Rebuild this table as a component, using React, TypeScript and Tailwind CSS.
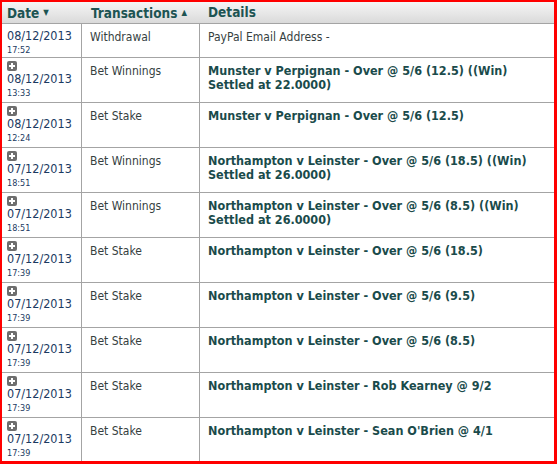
const rows = [
  { date: "08/12/2013", time: "17:52", type: "Withdrawal", details: ["PayPal Email Address -"], plain: true, icon: false },
  { date: "08/12/2013", time: "13:33", type: "Bet Winnings", details: ["Munster v Perpignan - Over @ 5/6 (12.5) ((Win)", "Settled at 22.0000)"] },
  { date: "08/12/2013", time: "12:24", type: "Bet Stake", details: ["Munster v Perpignan - Over @ 5/6 (12.5)"] },
  { date: "07/12/2013", time: "18:51", type: "Bet Winnings", details: ["Northampton v Leinster - Over @ 5/6 (18.5) ((Win)", "Settled at 26.0000)"] },
  { date: "07/12/2013", time: "18:51", type: "Bet Winnings", details: ["Northampton v Leinster - Over @ 5/6 (8.5) ((Win)", "Settled at 26.0000)"] },
  { date: "07/12/2013", time: "17:39", type: "Bet Stake", details: ["Northampton v Leinster - Over @ 5/6 (18.5)"] },
  { date: "07/12/2013", time: "17:39", type: "Bet Stake", details: ["Northampton v Leinster - Over @ 5/6 (9.5)"] },
  { date: "07/12/2013", time: "17:39", type: "Bet Stake", details: ["Northampton v Leinster - Over @ 5/6 (8.5)"] },
  { date: "07/12/2013", time: "17:39", type: "Bet Stake", details: ["Northampton v Leinster - Rob Kearney @ 9/2"] },
  { date: "07/12/2013", time: "17:39", type: "Bet Stake", details: ["Northampton v Leinster - Sean O'Brien @ 4/1"] },
];

function PlusIcon() {
  return (
    <svg width="10" height="10" viewBox="0 0 10 10" className="block">
      <rect x="0" y="0" width="10" height="10" rx="2" fill="#6e6e6e" />
      <path d="M5 2v6M2 5h6" stroke="#fff" strokeWidth="2" />
    </svg>
  );
}

export default function App() {
  return (
    <div
      className="w-[557px] h-[464px] overflow-hidden border-t-2 border-l-2 border-r-[3px] border-b-[3px] border-[#ff0000] bg-white"
      style={{ fontFamily: '"DejaVu Sans Condensed", "DejaVu Sans", sans-serif' }}
    >
      <div className="grid grid-cols-[80px_118px_1fr] h-[22px] bg-gradient-to-b from-[#f6f6f6] to-[#dadada] border-b border-[#a4a4a4] text-[13.5px] font-bold text-[#1d5453] leading-[20px]">
        <div className="pl-[5px] flex items-center gap-1">
          Date <span className="text-[8px]">▼</span>
        </div>
        <div className="pl-[9px] flex items-center gap-1">
          Transactions <span className="text-[8px]">▲</span>
        </div>
        <div className="pl-[8px]">Details</div>
      </div>
      {rows.map((r, i) => (
        <div
          key={i}
          className={`grid grid-cols-[80px_118px_1fr] border-b border-[#a4a4a4] ${i === 0 ? "h-[34px]" : "h-[45px]"}`}
        >
          <div className={`border-r border-[#a4a4a4] pl-[5px] text-[#1b3a62] ${i === 0 ? "pt-[4px]" : "pt-[3px]"}`}>
            {i > 0 && <PlusIcon />}
            <div className="text-[12.5px] leading-[16px]">{r.date}</div>
            <div className="text-[9px] leading-[12px]">{r.time}</div>
          </div>
          <div className="border-r border-[#a4a4a4] pl-[8px] pt-[6px] text-[12px] leading-[14px] text-[#363f3f]">
            {r.type}
          </div>
          <div
            className={`pl-[8px] pt-[6px] leading-[14px] whitespace-nowrap ${r.plain ? "text-[12px] text-[#363f3f]" : "text-[12.5px] font-bold text-[#1a4b4b]"}`}
          >
            {r.details.map((d, j) => (
              <div key={j}>{d}</div>
            ))}
          </div>
        </div>
      ))}
    </div>
  );
}
